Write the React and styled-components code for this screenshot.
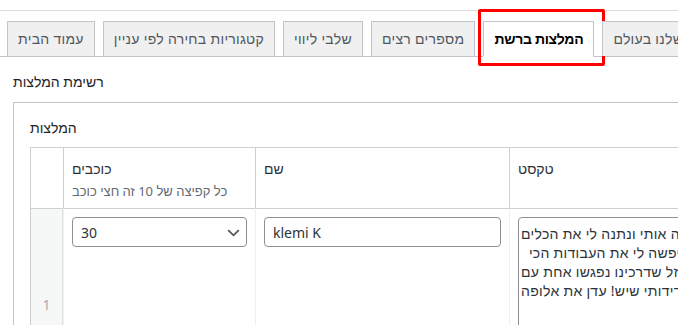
import React from "react";
import styled, { createGlobalStyle } from "styled-components";

const HEB = `"Noto Sans", "Liberation Sans", "DejaVu Sans", sans-serif`;
const LATIN = `"Noto Sans", "Open Sans", "Liberation Sans", sans-serif`;

const Global = createGlobalStyle`
  html, body { margin: 0; padding: 0; background: #fff; overflow: hidden; }
  body { font-family: ${HEB}; font-size: 14px; color: #1d2327; }
  * { box-sizing: border-box; }
`;

const Page = styled.div`
  width: 1000px;
`;

const TopRule = styled.div`
  height: 11px;
  border-bottom: 1px solid #dcdcde;
`;

const TabBar = styled.nav`
  display: flex;
  align-items: flex-end;
  gap: 8px;
  padding: 10px 0 0 7px;
  border-bottom: 1px solid #c3c4c7;
`;

const Tab = styled.a`
  position: relative;
  flex: none;
  padding: 5px 10px;
  line-height: 24px;
  font-size: 14px;
  white-space: nowrap;
  text-decoration: none;
  letter-spacing: ${(p) => (p.$active ? "-0.3px" : "0.3px")};
  border: 1px solid #c3c4c7;
  border-bottom: ${(p) => (p.$active ? "1px solid #fff" : "none")};
  margin-bottom: ${(p) => (p.$active ? "-1px" : "0")};
  background: ${(p) => (p.$active ? "#fff" : "#f0f0f1")};
  color: ${(p) => (p.$active ? "#000" : "#50575e")};
  font-weight: ${(p) => (p.$active ? 600 : 400)};
`;

const Highlight = styled.span`
  position: absolute;
  top: -13px;
  left: -6px;
  right: -12px;
  bottom: -10px;
  border: 3px solid #f00;
  border-radius: 2px;
  pointer-events: none;
`;

const Content = styled.div`
  padding: 0 13px;
`;

const SectionTitle = styled.h2`
  margin: 15px 0 10px;
  font-size: 14px;
  line-height: 20px;
  font-weight: 400;
  color: #1d2327;
`;

const Box = styled.div`
  border: 1px solid #c3c4c7;
  padding: 15px 16px;
  background: #fff;
`;

const FieldLabel = styled.div`
  font-size: 14px;
  line-height: 20px;
  font-weight: 500;
  color: #1d2327;
  margin-bottom: 9px;
`;

const Table = styled.table`
  width: 100%;
  table-layout: fixed;
  border-collapse: separate;
  border-spacing: 0;
  border: 1px solid #ccd0d4;
`;

const Th = styled.th`
  width: ${(p) => p.$w || "auto"};
  text-align: left;
  vertical-align: top;
  font-weight: 400;
  padding: 10px 8px 6px;
  border-left: ${(p) => (p.$first ? "none" : "1px solid #ccd0d4")};
  color: #1d2327;
`;

const ThLabel = styled.div`
  font-size: 14px;
  line-height: 22px;
  color: #2c3338;
`;

const ThDesc = styled.div`
  font-size: 13px;
  line-height: 22px;
  color: #646970;
`;

const Td = styled.td`
  padding: 8px;
  vertical-align: top;
  border-top: 1px solid #ccd0d4;
  border-left: ${(p) => (p.$first ? "none" : "1px solid #eee")};
`;

const OrderTd = styled(Td)`
  vertical-align: middle;
  text-align: center;
  background: #f6f7f7;
  color: #a7aaad;
  font-family: ${LATIN};
  font-size: 14px;
  border-right: 1px solid #e1e1e1;
`;

const SelectWrap = styled.div`
  position: relative;
`;

const Select = styled.select`
  appearance: none;
  width: 100%;
  height: 30px;
  padding: 0 24px 0 8px;
  border: 1px solid #8c8f94;
  border-radius: 4px;
  background: #fff;
  font-family: ${LATIN};
  font-size: 14px;
  color: #2c3338;
`;

const Chevron = styled.svg`
  position: absolute;
  right: 7px;
  top: 12px;
  pointer-events: none;
`;

const Input = styled.input`
  width: 100%;
  height: 30px;
  padding: 0 8px;
  border: 1px solid #8c8f94;
  border-radius: 4px;
  background: #fff;
  font-family: ${LATIN};
  font-size: 14px;
  color: #2c3338;
`;

const TextArea = styled.textarea`
  display: block;
  width: 100%;
  height: 174px;
  padding: 6px 2px;
  border: 1px solid #8c8f94;
  border-radius: 4px;
  background: #fff;
  font-family: ${HEB};
  font-size: 14px;
  line-height: 19px;
  letter-spacing: 0.3px;
  color: #2c3338;
  text-align: left;
  resize: none;
  overflow: hidden;
`;

const tabs = [
  "עמוד הבית",
  "קטגוריות בחירה לפי עניין",
  "שלבי ליווי",
  "מספרים רצים",
  "המלצות ברשת",
  "הסטודנטים שלנו בעולם",
];

const review = [
  "תודה לעדן המדהימה שלימדה אותי ונתנה לי את הכלים",
  "להצליח ולמצוא עבודה ואיפשה לי את העבודות הכי  ",
  "טובות שיש. איזה מזל שדרכינו נפגשו אחת עם",
  "מקצועית, סבלנית והכי ידידותי שיש! עדן את אלופה",
].join("\n");

export default function App() {
  return (
    <Page>
      <Global />
      <TopRule />
      <TabBar>
        {tabs.map((t, i) => (
          <Tab key={t} href="#" $active={i === 4}>
            {t}
            {i === 4 && <Highlight />}
          </Tab>
        ))}
      </TabBar>
      <Content>
        <SectionTitle>רשימת המלצות</SectionTitle>
        <Box>
          <FieldLabel>המלצות</FieldLabel>
          <Table>
            <thead>
              <tr>
                <Th $first $w="32px" />
                <Th $w="192px">
                  <ThLabel>כוכבים</ThLabel>
                  <ThDesc>כל קפיצה של 10 זה חצי כוכב</ThDesc>
                </Th>
                <Th $w="254px">
                  <ThLabel>שם</ThLabel>
                </Th>
                <Th>
                  <ThLabel>טקסט</ThLabel>
                </Th>
              </tr>
            </thead>
            <tbody>
              <tr>
                <OrderTd $first>1</OrderTd>
                <Td>
                  <SelectWrap>
                    <Select defaultValue="30">
                      {[10, 20, 30, 40, 50].map((v) => (
                        <option key={v} value={String(v)}>
                          {v}
                        </option>
                      ))}
                    </Select>
                    <Chevron width="13" height="8" viewBox="0 0 13 8">
                      <path d="M1.2 1.2 L6.5 6.3 L11.8 1.2" fill="none" stroke="#50575e" strokeWidth="1.8" />
                    </Chevron>
                  </SelectWrap>
                </Td>
                <Td>
                  <Input defaultValue="klemi K" />
                </Td>
                <Td>
                  <TextArea dir="rtl" wrap="off" readOnly defaultValue={review} />
                </Td>
              </tr>
            </tbody>
          </Table>
        </Box>
      </Content>
    </Page>
  );
}
